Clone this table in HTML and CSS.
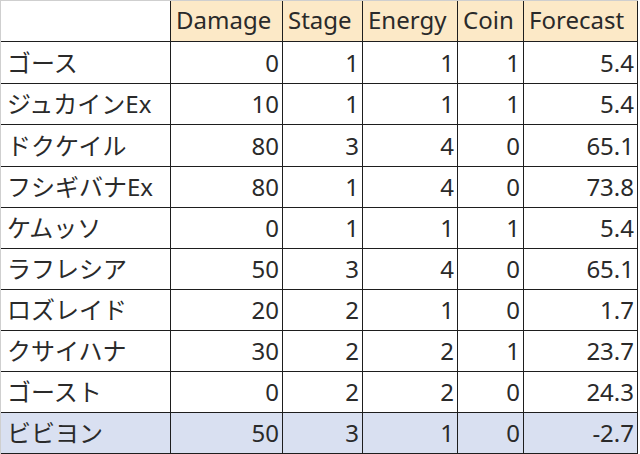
FILE: index.html
```html
<!DOCTYPE html>
<html lang="ja">
<head>
<meta charset="utf-8">
<title>Forecast</title>
<link rel="stylesheet" href="styles.css">
</head>
<body>
<div class="sheet">
  <div class="c hd blank"></div>
  <div class="c hd">Damage</div>
  <div class="c hd">Stage</div>
  <div class="c hd">Energy</div>
  <div class="c hd">Coin</div>
  <div class="c hd">Forecast</div>

  <div class="c nm">ゴース</div><div class="c n">0</div><div class="c n">1</div><div class="c n">1</div><div class="c n">1</div><div class="c n">5.4</div>
  <div class="c nm">ジュカインEx</div><div class="c n">10</div><div class="c n">1</div><div class="c n">1</div><div class="c n">1</div><div class="c n">5.4</div>
  <div class="c nm">ドクケイル</div><div class="c n">80</div><div class="c n">3</div><div class="c n">4</div><div class="c n">0</div><div class="c n">65.1</div>
  <div class="c nm">フシギバナEx</div><div class="c n">80</div><div class="c n">1</div><div class="c n">4</div><div class="c n">0</div><div class="c n">73.8</div>
  <div class="c nm">ケムッソ</div><div class="c n">0</div><div class="c n">1</div><div class="c n">1</div><div class="c n">1</div><div class="c n">5.4</div>
  <div class="c nm">ラフレシア</div><div class="c n">50</div><div class="c n">3</div><div class="c n">4</div><div class="c n">0</div><div class="c n">65.1</div>
  <div class="c nm">ロズレイド</div><div class="c n">20</div><div class="c n">2</div><div class="c n">1</div><div class="c n">0</div><div class="c n">1.7</div>
  <div class="c nm">クサイハナ</div><div class="c n">30</div><div class="c n">2</div><div class="c n">2</div><div class="c n">1</div><div class="c n">23.7</div>
  <div class="c nm">ゴースト</div><div class="c n">0</div><div class="c n">2</div><div class="c n">2</div><div class="c n">0</div><div class="c n">24.3</div>
  <div class="c nm sel">ビビヨン</div><div class="c n sel">50</div><div class="c n sel">3</div><div class="c n sel">1</div><div class="c n sel">0</div><div class="c n sel">-2.7</div>
</div>
</body>
</html>
```

FILE: styles.css
```css
html, body {
  margin: 0;
  padding: 0;
  background: #ffffff;
}

body {
  width: 640px;
  height: 454px;
  overflow: hidden;
  font-family: "Noto Sans", "Noto Sans CJK JP", sans-serif;
  font-size: 24px;
  font-weight: 400;
  color: #2a2a2a;
}

.sheet {
  display: grid;
  grid-template-columns: 170px 112px 80px 95px 66px 114px;
  grid-template-rows: 41px 42px 41px 42px 41px 41px 41px 41px 41px 41px 41px;
  width: max-content;
  border-top: 1px solid #cfcfcf;
  border-left: 1px solid #cfcfcf;
}

.c {
  box-sizing: border-box;
  display: flex;
  align-items: center;
  border-right: 1px solid #1e1e1e;
  border-bottom: 1px solid #1e1e1e;
  white-space: nowrap;
  line-height: 1;
}

.hd {
  background: #fce9c7;
  padding: 0 0 2px 5px;
}

.hd.blank {
  background: #ffffff;
}

.nm {
  padding: 0 0 0 6px;
}

.n {
  justify-content: flex-end;
  padding: 0 3px 0 0;
}

.sel {
  background: #d9e0f1;
}
```
